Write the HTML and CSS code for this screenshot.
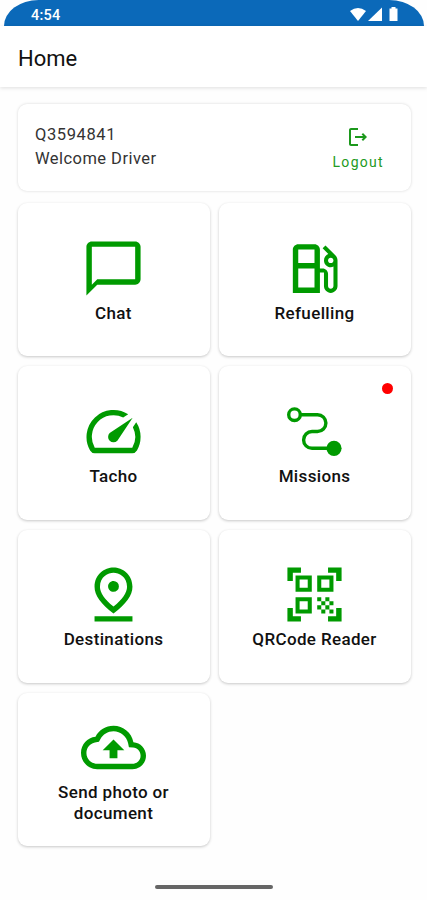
FILE: index.html
```html
<!DOCTYPE html>
<html lang="en">
<head>
  <meta charset="UTF-8">
  <meta name="viewport" content="width=device-width, initial-scale=1">
  <title>Home</title>
  <link rel="stylesheet" href="styles.css">
</head>
<body>

  <div class="status-bar">
    <span class="time">4:54</span>
    <svg class="status-icons" width="48" height="16" viewBox="0 0 48 16">
      <path d="M0 4Q8 -2 16 4L8 14z"/>
      <path d="M32 .5v13.5H18z"/>
      <path d="M39.5 1.5h2V0h4v1.5h2V14h-8z"/>
    </svg>
  </div>

  <header class="app-bar">
    <h1>Home</h1>
  </header>

  <main class="content">
    <section class="card user-card">
      <div class="user-info">
        <p class="user-id">Q3594841</p>
        <p class="user-name">Welcome Driver</p>
      </div>
      <button class="logout" type="button">
        <svg width="24" height="24" viewBox="0 0 24 24"><path d="m17 8-1.41 1.41L17.17 11H9v2h8.17l-1.58 1.58L17 16l4-4-4-4zM5 5h7V3H5c-1.1 0-2 .9-2 2v14c0 1.1.9 2 2 2h7v-2H5V5z"/></svg>
        <span>Logout</span>
      </button>
    </section>

    <nav class="menu">
      <a class="card tile">
        <svg class="icon" viewBox="0 0 24 24"><path d="M20 2H4c-1.1 0-2 .9-2 2v18l4-4h14c1.1 0 2-.9 2-2V4c0-1.1-.9-2-2-2zm0 14H6l-2 2V4h16v12z"/></svg>
        <span class="label">Chat</span>
      </a>

      <a class="card tile">
        <svg class="icon" viewBox="0 0 24 24"><path d="M19.77 7.23l.01-.01-3.72-3.72L15 4.56l2.11 2.11c-.94.36-1.61 1.26-1.61 2.33 0 1.38 1.12 2.5 2.5 2.5.36 0 .69-.08 1-.21v7.21c0 .55-.45 1-1 1s-1-.45-1-1V14c0-1.1-.9-2-2-2h-1V5c0-1.1-.9-2-2-2H6c-1.1 0-2 .9-2 2v16h10v-7.5h1.5v5c0 1.38 1.12 2.5 2.5 2.5s2.5-1.12 2.5-2.5V9c0-.69-.28-1.32-.73-1.77zM12 13.5V19H6v-7h6v1.5zm0-3.5H6V5h6v5zm6 0c-.55 0-1-.45-1-1s.45-1 1-1 1 .45 1 1-.45 1-1 1z"/></svg>
        <span class="label">Refuelling</span>
      </a>

      <a class="card tile">
        <svg class="icon" viewBox="0 0 24 24"><path d="M20.38 8.57l-1.23 1.85a8 8 0 0 1-.22 7.58H5.07A8 8 0 0 1 15.58 6.85l1.85-1.23A10 10 0 0 0 3.35 19a2 2 0 0 0 1.72 1h13.85a2 2 0 0 0 1.74-1 10 10 0 0 0-.27-10.44zm-9.79 6.84a2 2 0 0 0 2.83 0l5.66-8.49-8.49 5.66a2 2 0 0 0 0 2.83z"/></svg>
        <span class="label">Tacho</span>
      </a>

      <a class="card tile">
        <svg class="icon route" viewBox="0 0 65 65">
          <circle cx="12.5" cy="15.7" r="5.8"/>
          <path d="M18.5 15.7h17a8.4 8.4 0 0 1 0 16.8h-5.5a8.4 8.4 0 0 0 0 16.8h17"/>
          <circle class="end" cx="52" cy="49.3" r="7.6"/>
        </svg>
        <span class="label">Missions</span>
        <span class="badge"></span>
      </a>

      <a class="card tile">
        <svg class="icon" viewBox="0 0 24 24"><path d="M12 4c1.93 0 5 1.4 5 5.15 0 2.16-1.72 4.67-5 7.32-3.28-2.65-5-5.17-5-7.32C7 5.4 10.07 4 12 4m0-2C8.73 2 5 4.46 5 9.15c0 3.12 2.33 6.41 7 9.85 4.67-3.44 7-6.73 7-9.85C19 4.46 15.27 2 12 2zm0 5c-1.1 0-2 .9-2 2s.9 2 2 2a2 2 0 1 0 0-4zM5 20h14v2H5v-2z"/></svg>
        <span class="label">Destinations</span>
      </a>

      <a class="card tile">
        <svg class="icon" viewBox="0 0 24 24"><path d="M9.5 6.5v3h-3v-3h3M11 5H5v6h6V5zm-1.5 9.5v3h-3v-3h3M11 13H5v6h6v-6zm6.5-6.5v3h-3v-3h3M19 5h-6v6h6V5zm-6 8h1.5v1.5H13V13zm1.5 1.5H16V16h-1.5v-1.5zM16 13h1.5v1.5H16V13zm-3 3h1.5v1.5H13V16zm1.5 1.5H16V19h-1.5v-1.5zM16 16h1.5v1.5H16V16zm1.5-1.5H19V16h-1.5v-1.5zm0 3H19V19h-1.5v-1.5zM22 7h-2V4h-3V2h5v5zm0 15v-5h-2v3h-3v2h5zM2 22h5v-2H4v-3H2v5zM2 2v5h2V4h3V2H2z"/></svg>
        <span class="label">QRCode Reader</span>
      </a>

      <a class="card tile">
        <svg class="icon" viewBox="0 0 24 24"><path d="M19.35 10.04C18.67 6.59 15.64 4 12 4 9.11 4 6.6 5.64 5.35 8.04 2.34 8.36 0 10.91 0 14c0 3.31 2.69 6 6 6h13c2.76 0 5-2.24 5-5 0-2.64-2.05-4.78-4.65-4.96zM19 18H6c-2.21 0-4-1.79-4-4 0-2.05 1.53-3.76 3.56-3.97l1.07-.11.5-.95C8.08 7.14 9.94 6 12 6c2.62 0 4.88 1.86 5.39 4.43l.3 1.5 1.53.11c1.56.1 2.78 1.41 2.78 2.96 0 1.65-1.35 3-3 3zM8 13h2.55v3h2.9v-3H16l-4-4z"/></svg>
        <span class="label">Send photo or document</span>
      </a>
    </nav>
  </main>

  <footer class="gesture-bar"><span></span></footer>

</body>
</html>
```
FILE: styles.css
```css
* {
  box-sizing: border-box;
}

body {
  display: flex;
  flex-direction: column;
  height: 900px;
  margin: 0;
  background-color: #fefefe;
  font-family: Roboto, sans-serif;
  color: #111;
  overflow: hidden;
}

h1,
p {
  margin: 0;
  font-weight: 400;
}

.status-bar {
  display: flex;
  justify-content: space-between;
  align-items: center;
  height: 26px;
  margin: 0 3px 0 4px;
  padding: 4px 26px 0 27px;
  background-color: #0b69b9;
  border-radius: 36px 36px 0 0 / 27px 27px 0 0;
  color: #fff;
}

.time {
  font-size: 14.5px;
  font-weight: 500;
  letter-spacing: 0.2px;
}

.status-icons {
  fill: #fff;
}

.app-bar {
  display: flex;
  align-items: center;
  height: 61px;
  padding: 4px 18px 0;
  background-color: #fff;
  box-shadow: 0 1px 4px rgba(0, 0, 0, 0.13);
}

.app-bar h1 {
  font-size: 22px;
  line-height: 26px;
}

.content {
  padding: 17px 16px 0 18px;
}

.card {
  background-color: #fff;
  border-radius: 9px;
  box-shadow: 0 1px 3px rgba(0, 0, 0, 0.22);
}

.user-card {
  display: flex;
  justify-content: space-between;
  align-items: center;
  height: 87px;
  margin-bottom: 12px;
  padding: 0 27px 0 17px;
  box-shadow: 0 0 3px rgba(0, 0, 0, 0.16);
}

.user-info {
  padding-bottom: 2px;
  font-size: 16.5px;
  line-height: 23.5px;
  color: #333;
}

.user-id {
  letter-spacing: 0.6px;
}

.user-name {
  letter-spacing: 0.45px;
}

.logout {
  display: flex;
  flex-direction: column;
  align-items: center;
  padding: 0;
  border: none;
  background: none;
  font-family: inherit;
  font-size: 14px;
  line-height: 18px;
  letter-spacing: 1.3px;
  color: #229a22;
}

.logout svg {
  margin-bottom: 4px;
  fill: #1c981c;
}

.menu {
  display: grid;
  grid-template-columns: 1fr 1fr;
  grid-auto-rows: 153.3px;
  gap: 10px 9px;
}

.tile {
  position: relative;
  display: flex;
  flex-direction: column;
  align-items: center;
  justify-content: center;
  gap: 2px;
  padding-right: 1px;
}

.icon {
  width: 65px;
  height: 65px;
  fill: #009a00;
}

.route {
  fill: none;
  stroke: #009a00;
  stroke-width: 3.4;
}

.route .end {
  fill: #009a00;
  stroke: none;
}

.label {
  max-width: 130px;
  font-size: 17px;
  font-weight: 500;
  line-height: 21px;
  letter-spacing: 0.35px;
  text-align: center;
}

.badge {
  position: absolute;
  top: 17px;
  right: 18px;
  width: 11px;
  height: 11px;
  border-radius: 50%;
  background-color: #f00;
}

.gesture-bar {
  margin-top: auto;
  padding-bottom: 11px;
}

.gesture-bar span {
  display: block;
  width: 118px;
  height: 4px;
  margin: 0 auto;
  border-radius: 2px;
  background-color: #666;
}
```
